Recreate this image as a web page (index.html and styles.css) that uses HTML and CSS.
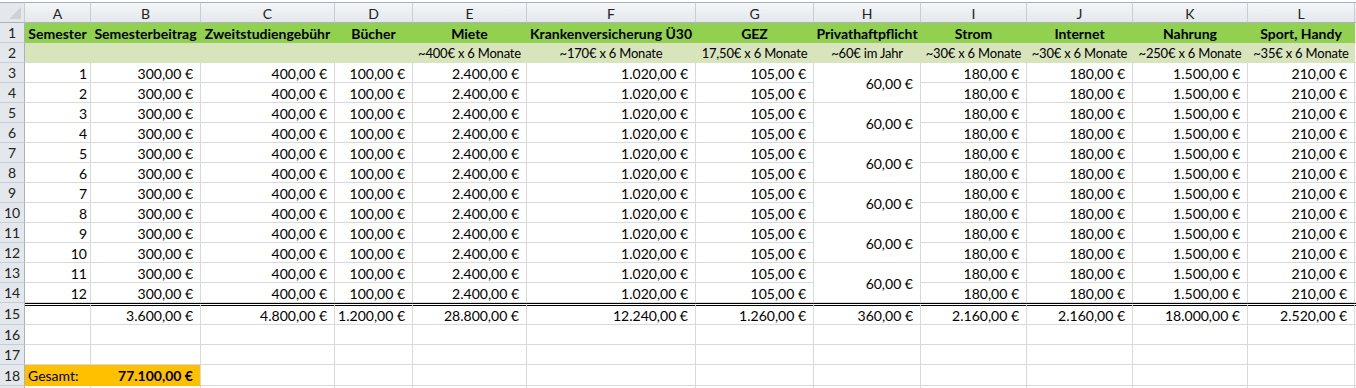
FILE: index.html
```html
<!DOCTYPE html>
<html lang="de">
<head>
<meta charset="utf-8">
<title>Studienkosten</title>
<link rel="stylesheet" href="styles.css">
</head>
<body>
<div class="sheet">
  <div class="ch corner"><span class="tri"></span></div>
  <div class="ch">A</div><div class="ch">B</div><div class="ch">C</div><div class="ch">D</div><div class="ch">E</div><div class="ch">F</div><div class="ch">G</div><div class="ch">H</div><div class="ch">I</div><div class="ch">J</div><div class="ch">K</div><div class="ch">L</div><div class="ch last"></div>

  <div class="rh">1</div>
  <div class="c g1 b">Semester</div><div class="c g1 b">Semesterbeitrag</div><div class="c g1 b">Zweitstudiengebühr</div><div class="c g1 b">Bücher</div><div class="c g1 b">Miete</div><div class="c g1 b">Krankenversicherung Ü30</div><div class="c g1 b">GEZ</div><div class="c g1 b">Privathaftpflicht</div><div class="c g1 b">Strom</div><div class="c g1 b">Internet</div><div class="c g1 b">Nahrung</div><div class="c g1 b">Sport, Handy</div><div class="c m"></div>

  <div class="rh">2</div>
  <div class="c g2"></div><div class="c g2"></div><div class="c g2"></div><div class="c g2"></div><div class="c g2">~400€ x 6 Monate</div><div class="c g2">~170€ x 6 Monate</div><div class="c g2">17,50€ x 6 Monate</div><div class="c g2">~60€ im Jahr</div><div class="c g2">~30€ x 6 Monate</div><div class="c g2">~30€ x 6 Monate</div><div class="c g2">~250€ x 6 Monate</div><div class="c g2">~35€ x 6 Monate</div><div class="c m"></div>

  <div class="rh">3</div>
  <div class="c n">1</div><div class="c e">300,00 €</div><div class="c e">400,00 €</div><div class="c e">100,00 €</div><div class="c e">2.400,00 €</div><div class="c e">1.020,00 €</div><div class="c e">105,00 €</div><div class="c e mg">60,00 €</div><div class="c e">180,00 €</div><div class="c e">180,00 €</div><div class="c e">1.500,00 €</div><div class="c e">210,00 €</div><div class="c m"></div>
  <div class="rh">4</div>
  <div class="c n">2</div><div class="c e">300,00 €</div><div class="c e">400,00 €</div><div class="c e">100,00 €</div><div class="c e">2.400,00 €</div><div class="c e">1.020,00 €</div><div class="c e">105,00 €</div><div class="c e">180,00 €</div><div class="c e">180,00 €</div><div class="c e">1.500,00 €</div><div class="c e">210,00 €</div><div class="c m"></div>

  <div class="rh">5</div>
  <div class="c n">3</div><div class="c e">300,00 €</div><div class="c e">400,00 €</div><div class="c e">100,00 €</div><div class="c e">2.400,00 €</div><div class="c e">1.020,00 €</div><div class="c e">105,00 €</div><div class="c e mg">60,00 €</div><div class="c e">180,00 €</div><div class="c e">180,00 €</div><div class="c e">1.500,00 €</div><div class="c e">210,00 €</div><div class="c m"></div>
  <div class="rh">6</div>
  <div class="c n">4</div><div class="c e">300,00 €</div><div class="c e">400,00 €</div><div class="c e">100,00 €</div><div class="c e">2.400,00 €</div><div class="c e">1.020,00 €</div><div class="c e">105,00 €</div><div class="c e">180,00 €</div><div class="c e">180,00 €</div><div class="c e">1.500,00 €</div><div class="c e">210,00 €</div><div class="c m"></div>

  <div class="rh">7</div>
  <div class="c n">5</div><div class="c e">300,00 €</div><div class="c e">400,00 €</div><div class="c e">100,00 €</div><div class="c e">2.400,00 €</div><div class="c e">1.020,00 €</div><div class="c e">105,00 €</div><div class="c e mg">60,00 €</div><div class="c e">180,00 €</div><div class="c e">180,00 €</div><div class="c e">1.500,00 €</div><div class="c e">210,00 €</div><div class="c m"></div>
  <div class="rh">8</div>
  <div class="c n">6</div><div class="c e">300,00 €</div><div class="c e">400,00 €</div><div class="c e">100,00 €</div><div class="c e">2.400,00 €</div><div class="c e">1.020,00 €</div><div class="c e">105,00 €</div><div class="c e">180,00 €</div><div class="c e">180,00 €</div><div class="c e">1.500,00 €</div><div class="c e">210,00 €</div><div class="c m"></div>

  <div class="rh">9</div>
  <div class="c n">7</div><div class="c e">300,00 €</div><div class="c e">400,00 €</div><div class="c e">100,00 €</div><div class="c e">2.400,00 €</div><div class="c e">1.020,00 €</div><div class="c e">105,00 €</div><div class="c e mg">60,00 €</div><div class="c e">180,00 €</div><div class="c e">180,00 €</div><div class="c e">1.500,00 €</div><div class="c e">210,00 €</div><div class="c m"></div>
  <div class="rh">10</div>
  <div class="c n">8</div><div class="c e">300,00 €</div><div class="c e">400,00 €</div><div class="c e">100,00 €</div><div class="c e">2.400,00 €</div><div class="c e">1.020,00 €</div><div class="c e">105,00 €</div><div class="c e">180,00 €</div><div class="c e">180,00 €</div><div class="c e">1.500,00 €</div><div class="c e">210,00 €</div><div class="c m"></div>

  <div class="rh">11</div>
  <div class="c n">9</div><div class="c e">300,00 €</div><div class="c e">400,00 €</div><div class="c e">100,00 €</div><div class="c e">2.400,00 €</div><div class="c e">1.020,00 €</div><div class="c e">105,00 €</div><div class="c e mg">60,00 €</div><div class="c e">180,00 €</div><div class="c e">180,00 €</div><div class="c e">1.500,00 €</div><div class="c e">210,00 €</div><div class="c m"></div>
  <div class="rh">12</div>
  <div class="c n">10</div><div class="c e">300,00 €</div><div class="c e">400,00 €</div><div class="c e">100,00 €</div><div class="c e">2.400,00 €</div><div class="c e">1.020,00 €</div><div class="c e">105,00 €</div><div class="c e">180,00 €</div><div class="c e">180,00 €</div><div class="c e">1.500,00 €</div><div class="c e">210,00 €</div><div class="c m"></div>

  <div class="rh">13</div>
  <div class="c n">11</div><div class="c e">300,00 €</div><div class="c e">400,00 €</div><div class="c e">100,00 €</div><div class="c e">2.400,00 €</div><div class="c e">1.020,00 €</div><div class="c e">105,00 €</div><div class="c e mg">60,00 €</div><div class="c e">180,00 €</div><div class="c e">180,00 €</div><div class="c e">1.500,00 €</div><div class="c e">210,00 €</div><div class="c m"></div>
  <div class="rh">14</div>
  <div class="c n">12</div><div class="c e">300,00 €</div><div class="c e">400,00 €</div><div class="c e">100,00 €</div><div class="c e">2.400,00 €</div><div class="c e">1.020,00 €</div><div class="c e">105,00 €</div><div class="c e">180,00 €</div><div class="c e">180,00 €</div><div class="c e">1.500,00 €</div><div class="c e">210,00 €</div><div class="c m"></div>

  <div class="rh">15</div>
  <div class="c t"></div><div class="c e t">3.600,00 €</div><div class="c e t">4.800,00 €</div><div class="c e t">1.200,00 €</div><div class="c e t">28.800,00 €</div><div class="c e t">12.240,00 €</div><div class="c e t">1.260,00 €</div><div class="c e t">360,00 €</div><div class="c e t">2.160,00 €</div><div class="c e t">2.160,00 €</div><div class="c e t">18.000,00 €</div><div class="c e t">2.520,00 €</div><div class="c m t"></div>

  <div class="rh">16</div>
  <div class="c"></div><div class="c"></div><div class="c"></div><div class="c"></div><div class="c"></div><div class="c"></div><div class="c"></div><div class="c"></div><div class="c"></div><div class="c"></div><div class="c"></div><div class="c"></div><div class="c m"></div>

  <div class="rh">17</div>
  <div class="c"></div><div class="c"></div><div class="c"></div><div class="c"></div><div class="c"></div><div class="c"></div><div class="c"></div><div class="c"></div><div class="c"></div><div class="c"></div><div class="c"></div><div class="c"></div><div class="c m"></div>

  <div class="rh">18</div>
  <div class="c o l">Gesamt:</div><div class="c o e b ob">77.100,00 €</div><div class="c"></div><div class="c"></div><div class="c"></div><div class="c"></div><div class="c"></div><div class="c"></div><div class="c"></div><div class="c"></div><div class="c"></div><div class="c"></div><div class="c m"></div>

  <div class="rh"></div>
  <div class="c"></div><div class="c"></div><div class="c"></div><div class="c"></div><div class="c"></div><div class="c"></div><div class="c"></div><div class="c"></div><div class="c"></div><div class="c"></div><div class="c"></div><div class="c"></div><div class="c m"></div>
</div>
</body>
</html>
```

FILE: styles.css
```css
html, body {
  margin: 0;
  padding: 0;
  background: #ffffff;
  width: 1356px;
  height: 388px;
  overflow: hidden;
}

.sheet {
  display: grid;
  grid-template-columns: 25px 66px 110px 134px 78px 114px 169px 118px 107px 106px 106px 115px 107px 1fr;
  grid-template-rows: 21px repeat(14, 20px) 22px 20px 20px 21px 20px;
  font-family: "Lato", "Liberation Sans", sans-serif;
  font-size: 14px;
  color: #000;
  border-top: 2px solid #ffffff;
}

.sheet > div {
  box-sizing: border-box;
  overflow: visible;
  white-space: nowrap;
}

/* column headers */
.ch {
  background: linear-gradient(#f4f6f8, #e4e8ec);
  border-top: 1px solid #a7b0ba;
  border-right: 1px solid #c7cdd4;
  border-bottom: 1px solid #a9b3bd;
  display: flex;
  align-items: center;
  justify-content: center;
  color: #222;
  padding-top: 1px;
}

.ch.corner {
  position: relative;
  background: #e4e8ec;
}

.tri {
  position: absolute;
  right: 3px;
  bottom: 3px;
  width: 0;
  height: 0;
  border-left: 12px solid transparent;
  border-bottom: 12px solid #cdd2d8;
}

.ch.last {
  border-right: none;
}

/* row headers */
.rh {
  background: #e4e8ec;
  border-right: 1px solid #a9b3bd;
  border-bottom: 1px solid #c7cdd4;
  display: flex;
  align-items: center;
  justify-content: center;
  color: #222;
}

/* cells */
.c {
  border-right: 1px solid #d9d9d9;
  border-bottom: 1px solid #d9d9d9;
  display: flex;
  align-items: center;
  justify-content: center;
  padding: 1px 3px 0 3px;
}

.c.m {
  border-right: none;
}

.g1 {
  background: #92d050;
  border-color: #92d050;
}

.g2 {
  background: #d8e4bc;
  border-color: #d8e4bc;
  font-size: 13px;
  letter-spacing: -0.2px;
}

.b {
  font-weight: 700;
}

.n {
  justify-content: flex-end;
}

.e {
  justify-content: flex-end;
  padding-right: 7px;
}

.l {
  justify-content: flex-start;
}

.mg {
  grid-row: span 2;
}

.t {
  border-top: 3px double #000;
  padding-top: 0;
}

.o {
  background: #ffc000;
  border-right-color: #ffc000;
  border-bottom-color: #ffc000;
}

.o.ob {
  border-right-color: #d9d9d9;
}
```
